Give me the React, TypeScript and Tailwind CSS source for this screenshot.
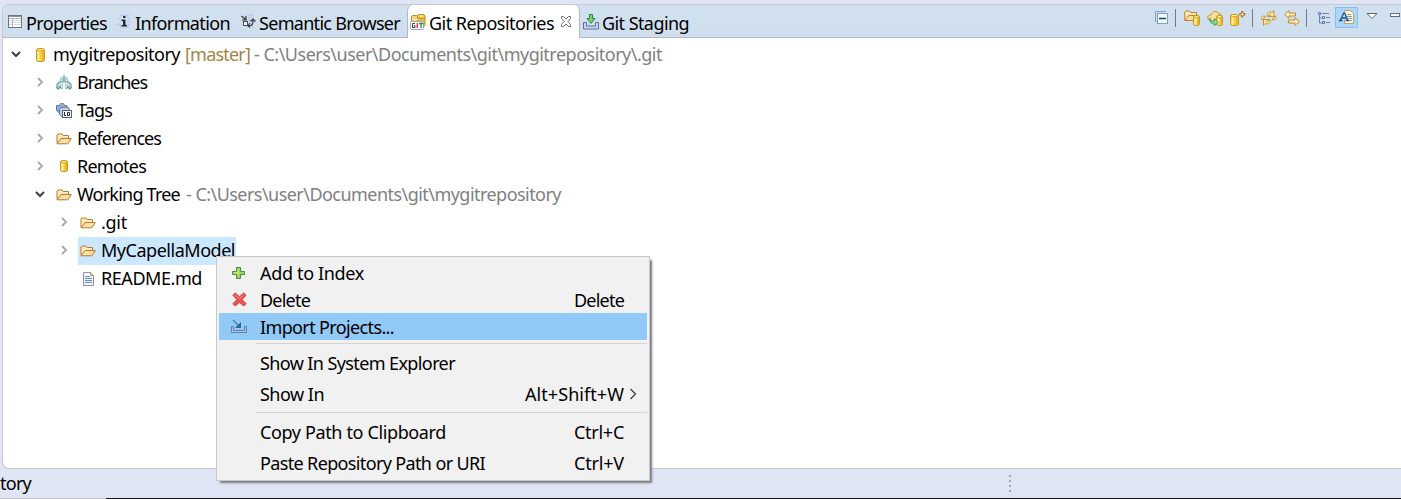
import React, { useLayoutEffect, useRef, useState } from "react";

/** One line of text whose tracking is adjusted to occupy `w` pixels. */
function T({ w, className = "", children }: { w: number; className?: string; children: string }) {
  const ref = useRef<HTMLSpanElement>(null);
  const [gap, setGap] = useState(0);
  useLayoutEffect(() => {
    const el = ref.current;
    if (!el) return;
    el.style.letterSpacing = "0px";
    setGap((w - el.getBoundingClientRect().width) / children.length);
    el.style.letterSpacing = "";
  }, [w, children]);
  return (
    <span ref={ref} className={`inline-block shrink-0 whitespace-pre ${className}`} style={{ letterSpacing: `${gap}px` }}>
      {children}
    </span>
  );
}

type IconProps = { className?: string };
function Svg({ className = "", children }: IconProps & { children: React.ReactNode }) {
  return (
    <svg viewBox="0 0 16 16" width="16" height="16" fill="none" className={`shrink-0 ${className}`}>
      {children}
    </svg>
  );
}

const PropertiesIcon = () => (
  <Svg>
    <rect x="1.5" y="1.5" width="13" height="12" fill="#fff" stroke="#6d7585" />
    <path d="M2 2.500h12" stroke="#8b94a3" strokeWidth="1" />
    <path d="M2 6.500h12M2 8.500h12M2 10.500h12" stroke="#d3dae3" />
    <path d="M5.500 4v9M2 4.500h12" stroke="#b0b7c2" />
  </Svg>
);
const InfoIcon = () => (
  <Svg>
    <path d="M4 1.500h9M2 4.500h12M4 7.500h11M1 10.500h13M4 13h9" stroke="#b3ccec" strokeWidth="1.600" />
    <path d="M5 2h6v11H5z" fill="#d5e4f3" />
    <path d="M7 2h2.500v2H7zM5.500 5.500h4V11H11v1.500H5.500V11H7V7H5.500z" fill="#26262a" />
  </Svg>
);
const SemanticIcon = () => (
  <Svg>
    <path d="M7 1h7M8 3.500h6M4 6.500h10M6 12.500h8" stroke="#b5cff0" strokeWidth="1.500" />
    <path d="M1.500 2l4 3.500M6 2v4H2M8 11.500h2.500c2 0 2.500-2 2.500-5M10.500 7.500L13 5l2.500 2.500M10 9l-2 2.500 2 2" stroke="#37383c" strokeWidth="1.200" />
    <rect x="3.500" y="7.500" width="4" height="4" fill="#f4f4f4" stroke="#4b4c50" />
  </Svg>
);

function Cylinder({ x = 4, y = 2, w = 8, h = 12 }: { x?: number; y?: number; w?: number; h?: number }) {
  return (
    <g>
      <rect x={x + 0.5} y={y + 0.5} width={w - 1} height={h - 1} rx="2" fill="#f4cc3c" stroke="#c8941e" />
      <path d={`M${x + 2.5} ${y + 3}v${h - 4.5}`} stroke="#fff1a0" strokeWidth="2" />
      <path d={`M${x + w - 2} ${y + 3}v${h - 5}`} stroke="#dda51e" />
      <path d={`M${x + 2} ${y + 1.5}h${w - 4}`} stroke="#fff0a4" />
      <path d={`M${x + 1} ${y + 2.7}h${w - 2}`} stroke="#d59e22" strokeWidth=".7" />
    </g>
  );
}

const RepoIcon = () => <Svg><Cylinder x={4} y={1} w={9} h={14} /></Svg>;
const RemoteIcon = () => <Svg><Cylinder x={4} y={1} w={8} h={12} /></Svg>;

const GitReposIcon = () => (
  <Svg>
    <path d="M1.500 8V2.500l1-1h4l1 1V8" fill="#f3d27c" stroke="#bd8a24" />
    <rect x="7.500" y=".5" width="7.500" height="12" rx="2" fill="#e9bc45" stroke="#bd8a24" />
    <path d="M2 5.500h6M9 2h4.500" stroke="#fbe68f" strokeWidth="1.400" />
    <path d="M8 4.500h7" stroke="#c99726" strokeWidth=".8" />
    <rect x=".5" y="7.500" width="13" height="8" rx="1" fill="#fff" stroke="#91aabc" />
    <path d="M5 9.500H2.500v4H5v-2H4" stroke="#3c3c3c" />
    <path d="M7.300 9v5" stroke="#d4333f" strokeWidth="1.400" />
    <path d="M9 9.500h4M11 10v4" stroke="#2b8a43" strokeWidth="1.300" />
  </Svg>
);
const StagingIcon = () => (
  <Svg>
    <path d="M3.500 8.500h-3v6.500h15V8.500h-3v3.500h-9z" fill="#c7d7eb" stroke="#5c709f" />
    <path d="M6.500.5h3v4H12L8 9.500 4 4.500h2.500z" fill="#79cf74" stroke="#238944" />
  </Svg>
);
const ImportIcon = () => (
  <Svg>
    <path d="M2.500 7.500h-2v6h15v-6h-2v4h-11z" fill="#a7c9ed" stroke="#6979a8" />
    <path d="M2 1l6 6" stroke="#49799f" strokeWidth="1.300" />
    <path d="M10 3v6H4z" fill="#246898" />
  </Svg>
);
const CloseIcon = () => (
  <Svg>
    <path d="M3.500 2.500h2L8 5l2.500-2.500h2v2L10 7.500l2.500 3v2h-2L8 10l-2.500 2.500h-2v-2l2.500-3-2.500-3z" fill="#fff" stroke="#6a6f76" />
  </Svg>
);
const BranchesIcon = () => (
  <Svg>
    <path d="M8 .5v7.500M5.500 2.500v4M10.500 2.500v4M7 7H4L1.500 9.500v4M.500 11.500l1.500 2 2-2M5.500 9v5M9 7h3l2.500 2.500v4M15.500 11.500l-1.500 2-2-2M10.500 9v5" stroke="#5d979c" strokeWidth="2.100" />
    <path d="M8 1v7M5.500 3v3.500M10.500 3v3.500M7 7H4L2 9.500V13M5.500 9v4.500M9 7h3l2 2.500V13M10.500 9v4.500" stroke="#d5efeb" strokeWidth=".9" />
  </Svg>
);
const TagsIcon = () => (
  <Svg>
    <path d="M.5 2.500h3l1-2h3l1 2H11v7H2.500L.5 7.500z" fill="#8bafe1" stroke="#5a7bae" />
    <path d="M3.500 6.500l2-2h7l1 2v7h-8l-2-2z" fill="#bdd5f4" stroke="#5576a8" />
    <path d="M4 1h4M7 4h5" stroke="#c59b54" />
    <rect x="6.500" y="7.500" width="9" height="7" fill="#fff" stroke="#565f77" />
    <path d="M8.500 9v3.500H10M11.500 9.500h2v3h-2z" stroke="#25283c" />
  </Svg>
);
const FolderIcon = () => (
  <Svg>
    <path d="M1 12.500V4l1-1h4l1 1.500h5.500v3" fill="#ffe9b8" stroke="#b57b36" strokeLinejoin="round" />
    <path d="M1.200 12.800L5 7.500h10.300l-3.500 5.300z" fill="#fae0a1" stroke="#b57b36" strokeLinejoin="round" />
  </Svg>
);
const FileIcon = () => (
  <Svg>
    <path d="M3.500 1.500h7l3 3v10h-10z" fill="#f5faff" stroke="#8491ae" />
    <path d="M10.500 1.500v3h3z" fill="#e5c981" stroke="#b9a570" />
    <path d="M5 5.500h5M5 7.500h7M5 9.500h7M5 11.500h7" stroke="#6589c0" />
  </Svg>
);
const AddIcon = () => (
  <Svg>
    <path d="M5.500 2.500h4v4h4v3h-4v4h-4v-4h-4v-3h4z" fill="#a7d45b" stroke="#448d43" />
    <path d="M7 4v4M3 8h5" stroke="#d4ec88" />
  </Svg>
);
const DeleteIcon = () => (
  <Svg>
    <path d="M4.300 1L8.500 4.800 12.700 1 15 3.300l-4 4.200 4 4.200-2.300 2.300-4.200-3.800L4.300 14 2 11.700l4-4.200-4-4.200z" fill="#eb5555" stroke="#cb3439" strokeLinejoin="round" />
    <path d="M4.300 3L8.500 6.500l4-3.500" stroke="#f59490" />
  </Svg>
);

const CollapseIcon = () => (
  <Svg>
    <path d="M1.500 12V1.500H12" stroke="#7ca4c9" />
    <rect x="3.500" y="3.500" width="10" height="10" fill="#f3faff" stroke="#7b9fc0" />
    <path d="M5 8.500h7" stroke="#0c4773" strokeWidth="1.500" />
  </Svg>
);
const AddRepoIcon = () => (
  <Svg>
    <path d="M.7 10V2l1-1h4l1 1.500h5.800v3" fill="#ffe4b1" stroke="#bd8139" />
    <path d="M.8 10.500l4-5h9v5z" fill="#fbdc9c" stroke="#bd8139" strokeLinejoin="round" />
    <Cylinder x={9} y={5} w={7} h={11} />
  </Svg>
);
const CloneIcon = () => (
  <Svg>
    <path d="M1 9C0 6 2 5 4 5c1-4 6-5 8-1 3 0 3 2 3 4l-3 3H3z" fill="#f8dc98" stroke="#ca902c" />
    <Cylinder x={9} y={5} w={7} h={11} />
    <path d="M3 8c0 3 2 3.500 4.500 3V8.500l4 4-4 3V14C4 14 2.500 12 3 8z" fill="#8ed68a" stroke="#359457" strokeWidth=".8" />
  </Svg>
);
const CreateIcon = () => (
  <Svg>
    <Cylinder x={0} y={4} w={9} h={12} />
    <path d="M11.500 1.500h1.500v2h2v1.500h-2v2h-1.500V5h-2V3.500h2z" fill="#fff2bf" stroke="#aa7831" />
  </Svg>
);
const RefreshIcon = () => (
  <Svg>
    <path d="M6.500 6.500C5.500 3.500 8 1 11 2.500L13 .7v5.800H8l1.700-1.700C8.500 4 7.500 5 8 6.500zM14.500 6c1.500 2.500-.5 4.500-3 4V8.500c1.500 0 2-1 1.500-2z" fill="#ffe7a6" stroke="#c88a28" strokeWidth=".9" />
    <path d="M9 9.500c1 3-1.500 5.500-4.500 4L2.500 15.300V9.500h5l-1.700 1.700c1.200.8 2.200-.2 1.700-1.700zM1 10c-1.500-2.500.5-4.500 3-4v1.500c-1.500 0-2 1-1.500 2z" fill="#ffe7a6" stroke="#c88a28" strokeWidth=".9" />
  </Svg>
);
const LinkIcon = () => (
  <Svg>
    <path d="M.7 4.500L5 .7V3h6.500v3H5v2.300z" fill="#fff0bb" stroke="#c3862c" />
    <path d="M15.300 11.500L11 7.700V10H4.500v3H11v2.300z" fill="#fff0bb" stroke="#c3862c" />
  </Svg>
);
const HierarchyIcon = () => (
  <Svg>
    <path d="M3.500 5v9H7M3.500 9H7" stroke="#7183ab" />
    <path d="M2.500 3.500h2v2h-2zM6.500 7.500h2v2h-2zM6.500 12.500h2v2h-2z" fill="#dbe7fa" stroke="#5b76a8" />
    <path d="M6 4.500h7M10 8.500h4M10 13.500h4" stroke="#7183ab" />
  </Svg>
);
const FilterIcon = () => (
  <Svg>
    <path d="M5.500 1.500h6l3 3v10h-9z" fill="#fff6d8" stroke="#b7a26d" />
    <path d="M8 5.500h4M8 7.500h5M9 9.500h4M10 11.500h3" stroke="#7d9ac0" />
    <path d="M1.500 11L5 3.500h.8L8.500 11z" fill="#c4dcf3" />
    <path d="M1.500 11L5 3.500M5.500 3.500l3 7.500M3 9h4.500M0 11.500h3.500M6.500 11.500H10" stroke="#1d548a" strokeWidth="1.300" />
  </Svg>
);

function Chevron({ open = false }: { open?: boolean }) {
  return (
    <Svg>
      {open ? <path d="M4 6l4 4 4-4" stroke="#404040" strokeWidth="2" /> : <path d="M6 4l4 4-4 4" stroke="#a6a6a6" strokeWidth="1.800" />}
    </Svg>
  );
}

const Divider = () => <span className="h-[18px] w-px bg-[#747b83]" />;

type RowProps = {
  pad: string;
  icon: React.ReactNode;
  label: string;
  w: number;
  root?: boolean;
  open?: boolean;
  leaf?: boolean;
  selected?: boolean;
  children?: React.ReactNode;
};
function TreeRow({ pad, icon, label, w, root, open, leaf, selected, children }: RowProps) {
  return (
    <div className={`flex h-7 items-center ${pad}`}>
      <span className="mr-[6px] flex w-4 pb-[2px]">{!leaf && <Chevron open={open} />}</span>
      <span className={`flex h-7 items-center pr-px pl-[2px] ${selected ? "bg-[#cce8ff]" : ""}`}>
        <span className={`flex pb-px ${root ? "mr-px" : "mr-[5px]"}`}>{icon}</span>
        <T w={w} className="pb-[2px]">{label}</T>
      </span>
      {children}
    </div>
  );
}

type ItemProps = { label: string; w: number; height: string; icon?: React.ReactNode; keys?: string; kw?: number; arrow?: boolean; active?: boolean; raise?: boolean };
function MenuItem({ label, w, height, icon, keys, kw = 50, arrow, active, raise }: ItemProps) {
  const lift = raise ? "pb-[2px]" : "";
  return (
    <div className={`flex items-center ${height} ${active ? "bg-[#91c9f7]" : ""}`}>
      <span className="flex w-[41px] pl-3">{icon}</span>
      <T w={w} className={lift}>{label}</T>
      <span className="flex-1" />
      {keys && <T w={kw} className={lift}>{keys}</T>}
      <span className="flex w-[23px] pb-px pl-[1px]">
        {arrow && <Svg><path d="M5.500 3l5 5-5 5" stroke="#404040" strokeWidth="1.300" /></Svg>}
      </span>
    </div>
  );
}

export default function App() {
  return (
    <div className="relative flex h-[499px] w-[1401px] flex-col overflow-hidden bg-[#dfe5f5] pt-1 pl-[2px] font-['Noto_Sans','Open_Sans',sans-serif] text-[18px] leading-[24px] text-black">
      <main className="flex h-[465px] shrink-0 flex-col overflow-hidden rounded-l-[7px] border border-r-0 border-[#c8c8cc] bg-white">
        <header className="flex h-[33px] shrink-0 bg-linear-to-b from-[#d2e1f0] to-[#cfdeed]">
          <div className="flex w-[404px] border-b border-[#b0b9cc] pt-[2px]">
            <div className="flex w-[113px] items-center gap-[3px] pl-1"><PropertiesIcon /><T w={81} className="pt-[2px]">Properties</T></div>
            <div className="flex w-[124px] items-center gap-[3px]"><InfoIcon /><T w={95} className="pt-[2px]">Information</T></div>
            <div className="flex items-center gap-[3px]"><SemanticIcon /><T w={141} className="pt-[2px]">Semantic Browser</T></div>
          </div>
          <div className="flex w-[173px] items-center rounded-t-[6px] border-x border-[#b0b9cc] bg-white pt-px pl-[2px]">
            <GitReposIcon />
            <T w={125} className="ml-[3px] pt-[2px]">Git Repositories</T>
            <span className="ml-1 flex"><CloseIcon /></span>
          </div>
          <div className="flex flex-1 items-center border-b border-[#b0b9cc] pt-[2px] pl-[3px]">
            <span className="flex"><StagingIcon /></span>
            <T w={87} className="ml-[3px] pt-[2px]">Git Staging</T>
            <div className="mb-[6px] ml-auto flex items-center">
              <span className="mb-[2px] flex"><CollapseIcon /></span>
              <span className="mb-[2px] ml-[5px] flex"><Divider /></span>
              <span className="mb-[2px] ml-2 flex gap-[7px]"><AddRepoIcon /><CloneIcon /><CreateIcon /></span>
              <span className="mb-[2px] ml-[6px] flex"><Divider /></span>
              <span className="mb-[2px] ml-2 flex gap-[7px]"><RefreshIcon /><LinkIcon /></span>
              <span className="mb-[2px] ml-[6px] flex"><Divider /></span>
              <span className="mb-[4px] ml-[9px] flex"><HierarchyIcon /></span>
              <span className="mb-[4px] ml-[3px] flex h-[21px] w-[23px] items-center justify-center border border-[#84c1f2] bg-[#afd5f7]"><FilterIcon /></span>
              <svg width="12" height="8" viewBox="0 0 12 8" className="mb-[7px] ml-2"><path d="M1 1.500h10L6 6.500z" fill="#fff" stroke="#606771" /></svg>
              <span className="mb-[9px] ml-3 h-1 w-[10px] border border-[#686d74] bg-white" />
              <span className="w-px" />
            </div>
          </div>
        </header>
        <section className="flex flex-col pt-[3px]">
          <TreeRow root pad="pl-[5px]" open icon={<span className="flex w-[20px]"><RepoIcon /></span>} label="mygitrepository" w={127}>
            <T w={65} className="ml-1 pb-[2px] text-[#a08548]">[master]</T>
            <T w={408} className="ml-[4px] pb-[2px] text-[#808080]">- C:\Users\user\Documents\git\mygitrepository\.git</T>
          </TreeRow>
          <TreeRow pad="pl-[29px]" icon={<BranchesIcon />} label="Branches" w={70} />
          <TreeRow pad="pl-[29px]" icon={<TagsIcon />} label="Tags" w={35} />
          <TreeRow pad="pl-[29px]" icon={<FolderIcon />} label="References" w={84} />
          <TreeRow pad="pl-[29px]" icon={<RemoteIcon />} label="Remotes" w={69} />
          <TreeRow pad="pl-[29px]" open icon={<FolderIcon />} label="Working Tree" w={103}>
            <T w={375} className="ml-[5px] pb-[2px] text-[#808080]">- C:\Users\user\Documents\git\mygitrepository</T>
          </TreeRow>
          <TreeRow pad="pl-[53px]" icon={<FolderIcon />} label=".git" w={26} />
          <TreeRow pad="pl-[53px]" selected icon={<FolderIcon />} label="MyCapellaModel" w={134} />
          <TreeRow pad="pl-[53px]" leaf icon={<FileIcon />} label="README.md" w={101} />
        </section>
      </main>
      <footer className="-ml-[2px] flex h-[29px] shrink-0 items-start">
        <T w={31} className="pt-[2px]">tory</T>
        <div className="ml-[978px] flex flex-col gap-[3px] pt-[6px]">
          <i className="size-[2px] bg-[#a6a69c]" />
          <i className="size-[2px] bg-[#a6a69c]" />
          <i className="size-[2px] bg-[#a6a69c]" />
          <i className="size-[2px] bg-[#a6a69c]" />
        </div>
      </footer>
      <div className="-ml-[2px] flex h-px shrink-0"><span className="w-[106px] bg-[#c4c5ca]" /><span className="flex-1 bg-[#18191d]" /></div>

      <div className="absolute top-[256px] left-[216px] h-[225px] w-[434px] border border-[#c8c8c8] bg-[#f1f1f1] p-[2px] shadow-[3px_3px_2px_-1px_#777a82]">
        <MenuItem height="h-[27px]" icon={<AddIcon />} label="Add to Index" w={104} />
        <MenuItem height="h-[27px]" icon={<DeleteIcon />} label="Delete" w={50} keys="Delete" />
        <MenuItem height="h-[27px]" active icon={<ImportIcon />} label="Import Projects..." w={134} />
        <div className="mt-[3px] mb-1 ml-[37px] h-px bg-[#d4d4d4]" />
        <MenuItem raise height="h-[31px]" label="Show In System Explorer" w={195} />
        <MenuItem raise height="h-[31px]" label="Show In" w={64} keys="Alt+Shift+W" kw={99} arrow />
        <div className="mt-[2px] mb-1 ml-[37px] h-px bg-[#d4d4d4]" />
        <MenuItem raise height="h-[31px]" label="Copy Path to Clipboard" w={186} keys="Ctrl+C" />
        <MenuItem raise height="h-[31px]" label="Paste Repository Path or URI" w={225} keys="Ctrl+V" />
      </div>
    </div>
  );
}
